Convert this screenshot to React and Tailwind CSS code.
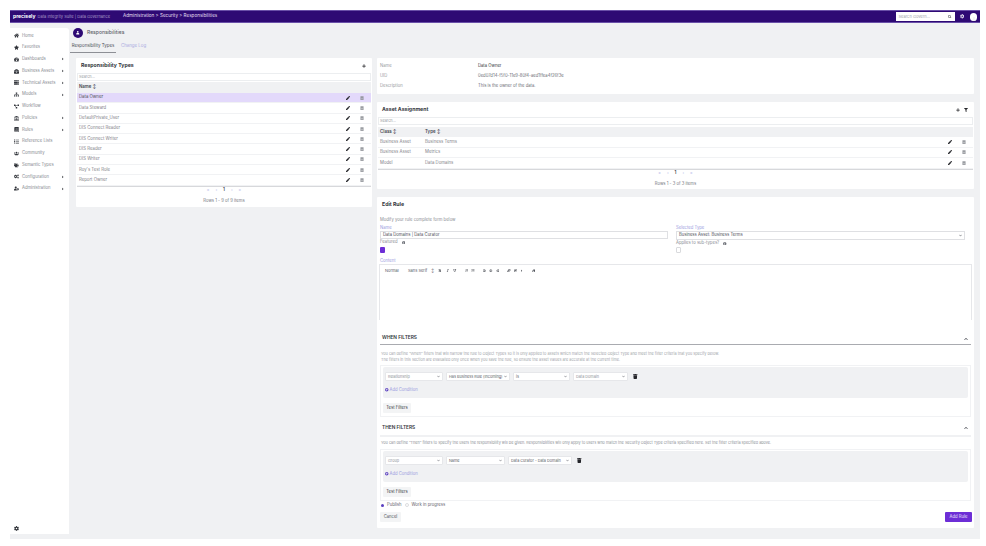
import {
  FaHome, FaStar, FaTachometerAlt, FaBriefcase, FaServer, FaSitemap, FaProjectDiagram, FaLandmark,
  FaBook, FaList, FaUsers, FaTags, FaCogs, FaUserCog, FaCaretRight, FaPen, FaTrash, FaTrashAlt,
  FaPlus, FaFilter, FaSearch, FaCog, FaChevronUp, FaChevronDown, FaInfoCircle, FaPlusCircle, FaUser,
  FaBold, FaItalic, FaUnderline, FaAlignLeft, FaAlignCenter, FaAlignRight, FaLink, FaImage, FaEraser,
  FaListUl, FaListOl,
} from "react-icons/fa";

const NAV = [
  [FaHome, "Home"],
  [FaStar, "Favorites"],
  [FaTachometerAlt, "Dashboards", true],
  [FaBriefcase, "Business Assets", true],
  [FaServer, "Technical Assets", true],
  [FaSitemap, "Models", true],
  [FaProjectDiagram, "Workflow"],
  [FaLandmark, "Policies", true],
  [FaBook, "Rules", true],
  [FaList, "Reference Lists"],
  [FaUsers, "Community"],
  [FaTags, "Semantic Types"],
  [FaCogs, "Configuration", true],
  [FaUserCog, "Administration", true],
];

const TYPES = [
  "Data Owner",
  "Data Steward",
  "DefaultPrivate_User",
  "DIS Connect Reader",
  "DIS Connect Writer",
  "DIS Reader",
  "DIS Writer",
  "Roy's Test Role",
  "Report Owner",
];

const ASSETS = [
  ["Business Asset", "Business Terms"],
  ["Business Asset", "Metrics"],
  ["Model", "Data Domains"],
];

function Sidebar() {
  return (
    <div className="w-[59px] mt-[5px] mb-[5px] bg-white flex flex-col justify-between rounded-tr-[3px] pt-[2px]">
      <div className="flex flex-col">
        {NAV.map(([Icon, label, more]) => (
          <div key={label} className="h-[11.75px] flex items-center pl-[4px] pr-[4px] text-[4.2px] text-[#868990]">
            <Icon className="w-[5px] h-[5px] text-[#33363c] mr-[3px] shrink-0" />
            <span className="flex-1 whitespace-nowrap">{label}</span>
            {more && <FaCaretRight className="w-[4px] h-[4px] text-[#2b2d33]" />}
          </div>
        ))}
      </div>
      <div className="pl-[4px] pb-[3px]">
        <FaCog className="w-[5px] h-[5px] text-[#33363c]" />
      </div>
    </div>
  );
}

function RowIcons({ right = "pr-[7px]" }) {
  return (
    <div className={`flex items-center gap-[10px] ${right}`}>
      <FaPen className="w-[4px] h-[4px] text-[#26272b]" />
      <FaTrashAlt className="w-[4px] h-[4px] text-[#8b8e94]" />
    </div>
  );
}

function Pager({ label }) {
  return (
    <div className="flex flex-col items-center">
      <div className="h-[8px] flex items-center gap-[6px] text-[4.4px] text-[#b9bcea]">
        <span>«</span>
        <span>‹</span>
        <span className="text-[#33363c] font-semibold">1</span>
        <span>›</span>
        <span>»</span>
      </div>
      <div className="mt-[3px] text-[4.2px] text-[#74777e]">{label}</div>
    </div>
  );
}

function Select({ w, text, dark }) {
  return (
    <div className={`${w} h-[9px] bg-white border border-[#e6e7ea] rounded-[1px] flex items-center justify-between px-[2px] text-[3.8px] ${dark ? "text-[#5a5d65]" : "text-[#8f9298]"}`}>
      <span className="whitespace-nowrap">{text}</span>
      <FaChevronDown className="w-[3px] h-[3px] text-[#6a6d74] shrink-0" />
    </div>
  );
}

function FilterBox({ selects, height }) {
  return (
    <div className="border border-[#f1f2f4] mx-[3px] px-[2px] pt-[1px] pb-[3px]">
      <div className={`${height} bg-[#f0f1f3] rounded-[2px] pl-[2px] pt-[5px]`}>
        <div className="flex items-center gap-[3px]">
          {selects.map(([w, t, d]) => (
            <Select key={t} w={w} text={t} dark={d} />
          ))}
          <FaTrash className="w-[4.5px] h-[5px] text-[#24252a] ml-[2px]" />
        </div>
        <div className="mt-[6px] flex items-center gap-[1px] text-[4.2px] text-[#9a9ce0]">
          <FaPlusCircle className="w-[3.5px] h-[3.5px] text-[#5a3fc0]" />
          <span>Add Condition</span>
        </div>
      </div>
      <div className="mt-[5px] w-[28px] h-[10px] bg-[#f3f4f5] rounded-[1px] flex items-center justify-center text-[4.2px] text-[#33363c]">
        Test Filters
      </div>
    </div>
  );
}

export default function App() {
  return (
    <div className="w-[986px] h-[546px] bg-white pt-[10px] px-[10px] pr-[6px]" style={{ fontFamily: "Inter, 'Liberation Sans', sans-serif" }}>
      {/* top bar */}
      <div className="h-[13px] bg-[#2e0a74] border-y border-[#6a50a8] flex items-center pl-[3px] pr-[3px]">
        <span className="text-[5px] font-bold text-white">precisely</span>
        <span className="text-[4px] text-[#a99cc9] ml-[2px]">Data Integrity Suite | Data Governance</span>
        <span className="text-[4.6px] text-[#e4dff0] ml-[13px] flex-1">Administration &gt; Security &gt; Responsibilities</span>
        <div className="w-[59px] h-[9px] bg-white flex items-center justify-between px-[3px] text-[4px] text-[#a0a3aa]">
          <span>Search Govern...</span>
          <FaSearch className="w-[3.5px] h-[3.5px] text-[#60636a]" />
        </div>
        <FaCog className="w-[4.5px] h-[4.5px] text-[#d8d3e8] ml-[5px]" />
        <div className="w-[7px] h-[8px] rounded-full bg-white ml-[6px] flex items-end justify-center overflow-hidden">
          <FaUser className="w-[4px] h-[4px] text-[#f2f2f4]" />
        </div>
      </div>

      <div className="h-[516px] bg-[#f0f1f3] flex">
        <Sidebar />

        <div className="flex-1 min-w-0 flex flex-col">
          {/* page title */}
          <div className="h-[14px] mt-[3px] flex items-center pl-[4px]">
            <div className="w-[10px] h-[10px] rounded-full bg-[#2e0a74] flex items-center justify-center">
              <FaUser className="w-[3.5px] h-[3.5px] text-white" />
            </div>
            <span className="text-[5px] font-medium text-[#5d6068] ml-[4px]">Responsibilities</span>
          </div>
          {/* tabs */}
          <div className="flex h-[13px] text-[4.4px]">
            <div className="w-[46px] ml-[1px] border-b-[1.5px] border-[#8d8f95] flex items-center justify-center text-[#4b4e56]">
              Responsibility Types
            </div>
            <div className="flex items-center ml-[5px] text-[#a9aadf]">Change Log</div>
          </div>

          <div className="flex gap-[5px] pl-[7px] pr-[6px] mt-[5px]">
            {/* left column */}
            <div className="w-[296px] h-[149px] bg-white rounded-[1px] px-[1px] shrink-0">
              <div className="h-[15px] flex items-center justify-between pl-[4px] pr-[5px]">
                <span className="text-[5.2px] font-bold text-[#33363c]">Responsibility Types</span>
                <FaPlus className="w-[4px] h-[4px] text-[#26272b]" />
              </div>
              <div className="h-[8px] border border-[#eceef0] flex items-center px-[1px] text-[3.8px] text-[#9a9da3]">Search...</div>
              <div className="h-[11px] mt-[1px] bg-[#f0f1f3] flex items-center px-[2px] text-[4.4px] font-semibold text-[#44474f]">
                Name ↕
              </div>
              {TYPES.map((name, i) => (
                <div
                  key={name}
                  className={`h-[10.3px] flex items-center justify-between pl-[2px] text-[4.3px] border-b border-[#f1f2f4] ${i === 0 ? "bg-[#e3d9fb] text-[#4b4e56]" : "text-[#7f8289]"}`}
                >
                  <span>{name}</span>
                  <RowIcons />
                </div>
              ))}
              <div className="border-t border-[#d7d8db]">
                <Pager label="Rows 1 - 9 of 9 items" />
              </div>
            </div>

            {/* right column */}
            <div className="flex-1 min-w-0 flex flex-col gap-[8px]">
              <div className="h-[36px] bg-white rounded-[1px] px-[3px] pt-[3px] text-[4.2px] text-[#979aa0]">
                <div className="h-[10px] flex items-center">
                  <span className="w-[98px]">Name</span>
                  <span className="text-[#33363c]">Data Owner</span>
                </div>
                <div className="h-[10px] flex items-center">
                  <span className="w-[98px]">UID</span>
                  <span className="text-[#6a6d75]">0ed07d14-f5f0-11e9-80f4-aed1ffea4f26f3e</span>
                </div>
                <div className="h-[10px] flex items-center">
                  <span className="w-[98px]">Description</span>
                  <span className="text-[#6a6d75]">This is the owner of the data.</span>
                </div>
              </div>

              <div className="h-[87px] bg-white rounded-[1px] px-[1px]">
                <div className="h-[15px] flex items-center justify-between pl-[4px] pr-[5px]">
                  <span className="text-[5.2px] font-bold text-[#33363c]">Asset Assignment</span>
                  <div className="flex items-center gap-[4px]">
                    <FaPlus className="w-[4px] h-[4px] text-[#26272b]" />
                    <FaFilter className="w-[4px] h-[4px] text-[#26272b]" />
                  </div>
                </div>
                <div className="h-[8px] border border-[#eceef0] flex items-center px-[1px] text-[3.8px] text-[#9a9da3]">Search...</div>
                <div className="h-[10px] mt-[2px] bg-[#f0f1f3] flex items-center px-[2px] text-[4.4px] font-semibold text-[#44474f]">
                  <span className="w-[45px]">Class ↕</span>
                  <span>Type ↕</span>
                </div>
                {ASSETS.map(([cls, type]) => (
                  <div key={type} className="h-[10.5px] flex items-center pl-[2px] text-[4.3px] text-[#7f8289] border-b border-[#f1f2f4]">
                    <span className="w-[45px]">{cls}</span>
                    <span className="flex-1">{type}</span>
                    <RowIcons />
                  </div>
                ))}
                <div className="border-t border-[#d7d8db]">
                  <Pager label="Rows 1 - 3 of 3 items" />
                </div>
              </div>

              <div className="h-[331px] bg-white rounded-[1px]">
                <div className="h-[15px] flex items-center pl-[5px] text-[5.2px] font-bold text-[#33363c]">Edit Rule</div>
                <div className="h-[8px] mt-[4px] flex items-center pl-[3px] text-[4.2px] text-[#8a8d94]">Modify your rule complete form below</div>

                <div className="flex gap-[8px] px-[3px] mt-[1px]">
                  <div className="w-[288px]">
                    <div className="h-[6px] flex items-center text-[4.2px] text-[#9a9ce0]">Name</div>
                    <div className="h-[8px] border border-[#dfe0e3] flex items-center px-[2px] text-[4.2px] text-[#4a4d55]">Data Domains | Data Curator</div>
                    <div className="h-[7px] flex items-center gap-[4px] text-[4.2px] text-[#8a8d94]">
                      Featured <FaInfoCircle className="w-[3.5px] h-[3.5px] text-[#70737a]" />
                    </div>
                    <div className="w-[5px] h-[6px] mt-[1px] bg-[#6d2ed6] rounded-[1px]" />
                  </div>
                  <div className="w-[289px]">
                    <div className="h-[6px] flex items-center text-[4.2px] text-[#9a9ce0]">Selected Type</div>
                    <div className="h-[9px] border border-[#dfe0e3] flex items-center justify-between px-[2px] text-[4.2px] text-[#4a4d55]">
                      <span>Business Asset: Business Terms</span>
                      <FaChevronDown className="w-[3px] h-[3px] text-[#55585f]" />
                    </div>
                    <div className="h-[7px] flex items-center gap-[4px] text-[4.2px] text-[#8a8d94]">
                      Applies to sub-types? <FaInfoCircle className="w-[3.5px] h-[3.5px] text-[#70737a]" />
                    </div>
                    <div className="w-[5px] h-[6px] border border-[#d9dadd] rounded-[1px]" />
                  </div>
                </div>

                <div className="h-[6px] mt-[5px] pl-[3px] flex items-center text-[4.2px] text-[#9a9ce0]">Content</div>
                <div className="h-[56px] mx-[2px] border-t border-x border-[#e6e7ea] pt-[3px] pl-[5px] flex items-start">
                  <div className="flex items-center h-[5px] text-[#55585f]">
                    <span className="text-[4px] w-[23px]">Normal</span>
                    <span className="text-[4px] w-[23px]">Sans Serif</span>
                    <span className="text-[4px] w-[7px]">↕</span>
                    <div className="flex items-center gap-[4px]">
                      <FaBold className="w-[3.5px] h-[3.5px]" />
                      <FaItalic className="w-[3.5px] h-[3.5px]" />
                      <FaUnderline className="w-[3.5px] h-[3.5px]" />
                    </div>
                    <div className="flex items-center gap-[3px] ml-[8px]">
                      <FaListOl className="w-[3.5px] h-[3.5px]" />
                      <FaListUl className="w-[3.5px] h-[3.5px]" />
                    </div>
                    <div className="flex items-center gap-[3px] ml-[8px]">
                      <FaAlignLeft className="w-[3.5px] h-[3.5px]" />
                      <FaAlignCenter className="w-[3.5px] h-[3.5px]" />
                      <FaAlignRight className="w-[3.5px] h-[3.5px]" />
                    </div>
                    <div className="flex items-center gap-[3px] ml-[8px]">
                      <FaLink className="w-[3.5px] h-[3.5px]" />
                      <FaImage className="w-[3.5px] h-[3.5px]" />
                      <FaCaretRight className="w-[3.5px] h-[3.5px]" />
                    </div>
                    <FaEraser className="w-[3.5px] h-[3.5px] ml-[8px]" />
                  </div>
                </div>

                {/* when filters */}
                <div className="h-[25px] mx-[3px] border-b border-[#a9abb0] flex items-end justify-between pb-[3px] pl-[2px] pr-[3px]">
                  <span className="text-[4.8px] font-semibold text-[#33363c]">WHEN FILTERS</span>
                  <FaChevronUp className="w-[4px] h-[4px] text-[#44474f]" />
                </div>
                <div className="h-[20px] pt-[6px] pl-[4px] text-[3.8px] leading-[6px] text-[#a2a5ab]">
                  <div>You can define “When” filters that will narrow the rule to Object Types so it is only applied to assets which match the Selected Object Type and meet the filter criteria that you specify below.</div>
                  <div>The filters in this section are evaluated only once when you save the rule, so ensure the asset values are accurate at the current time.</div>
                </div>
                <FilterBox
                  height="h-[31px]"
                  selects={[
                    ["w-[58px]", "Relationship"],
                    ["w-[64px]", "Has Business Rule (Incoming)", true],
                    ["w-[57px]", "is", true],
                    ["w-[55px]", "Data Domain"],
                  ]}
                />

                {/* then filters */}
                <div className="h-[17px] mx-[3px] mt-[3px] border-b-2 border-[#f0f1f3] flex items-center justify-between pl-[2px] pr-[3px]">
                  <span className="text-[4.8px] font-semibold text-[#33363c]">THEN FILTERS</span>
                  <FaChevronUp className="w-[4px] h-[4px] text-[#44474f]" />
                </div>
                <div className="h-[12px] flex items-center pl-[4px] text-[3.8px] text-[#8f9298] whitespace-nowrap">
                  You can define “Then” filters to specify the users the responsibility will be given. Responsibilities will only apply to users who match the Security Object Type criteria specified here. Set the filter criteria specified above.
                </div>
                <FilterBox
                  height="h-[31px]"
                  selects={[
                    ["w-[58px]", "Group"],
                    ["w-[59px]", "Name", true],
                    ["w-[64px]", "Data Curator - Data Domain", true],
                  ]}
                />

                <div className="h-[8px] pl-[4px] flex items-center text-[4.2px] text-[#5f626a]">
                  <span className="w-[3px] h-[3px] rounded-full bg-[#5a3fc0] mr-[3px]" />
                  Publish
                  <span className="w-[4px] h-[4px] rounded-full border border-[#dcdde0] ml-[4px] mr-[2px]" />
                  Work in progress
                </div>
                <div className="flex items-center justify-between pl-[3px] pr-[2px] mt-[3px]">
                  <div className="w-[21px] h-[10px] bg-[#f3f4f5] rounded-[1px] flex items-center justify-center text-[4.2px] text-[#55585f]">Cancel</div>
                  <div className="w-[27px] h-[10px] bg-[#6d2ed6] rounded-[1px] flex items-center justify-center text-[4.2px] text-[#e8e0fa]">Add Rule</div>
                </div>
              </div>
            </div>
          </div>
        </div>
      </div>
    </div>
  );
}
